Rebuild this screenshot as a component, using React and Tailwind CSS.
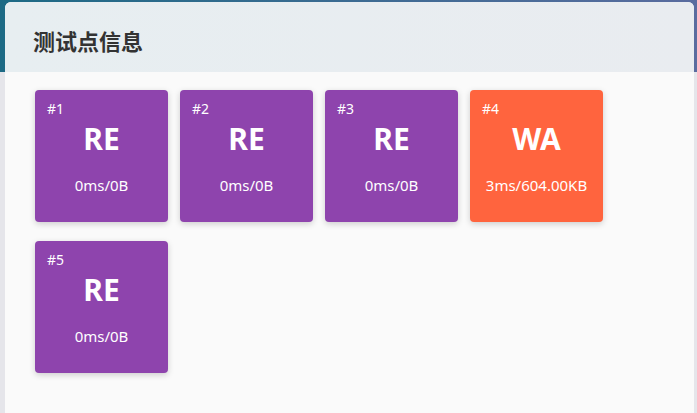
import React from "react";

const tests = [
  { id: 1, s: "RE", info: "0ms/0B" },
  { id: 2, s: "RE", info: "0ms/0B" },
  { id: 3, s: "RE", info: "0ms/0B" },
  { id: 4, s: "WA", info: "3ms/604.00KB" },
  { id: 5, s: "RE", info: "0ms/0B" },
];

export default function App() {
  return (
    <div className="w-[697px] h-[413px] overflow-hidden bg-[#e5e5ea] bg-[linear-gradient(to_right,#1d6a85,#5a6c9f)] bg-no-repeat bg-[length:100%_72px] pt-[2px] pl-[5px] pr-[3px]" style={{ fontFamily: '"Noto Sans", "Noto Sans CJK SC", sans-serif' }}>
      <div className="h-[420px] rounded-t-md bg-[#fafafa] overflow-hidden">
        <div className="h-[70px] bg-[linear-gradient(to_right,#e7eef1,#e9ecf0)] pl-[28px] pt-[25px]">
          <h2 className="text-[22px] leading-[26px] font-bold text-[#333]" style={{ fontFamily: '"Noto Sans CJK SC", sans-serif' }}>测试点信息</h2>
        </div>
        <div className="pl-[30px] pt-[18px] grid grid-cols-[repeat(4,133px)] gap-x-[12px] gap-y-[19px]">
          {tests.map((t) => (
            <div
              key={t.id}
              className={`h-[132px] rounded-[4px] text-white shadow-[0_2px_6px_rgba(0,0,0,0.18)] flex flex-col ${t.s === "WA" ? "bg-[#ff643e]" : "bg-[#8e44ad]"}`}
            >
              <div className="pt-[10px] px-[12px] text-[14px] leading-[18px]">#{t.id}</div>
              <div className="mt-[3px] text-center text-[30px] leading-[36px] font-bold">{t.s}</div>
              <div className="mt-[18px] text-center text-[15px] leading-[20px]">{t.info}</div>
            </div>
          ))}
        </div>
      </div>
    </div>
  );
}
